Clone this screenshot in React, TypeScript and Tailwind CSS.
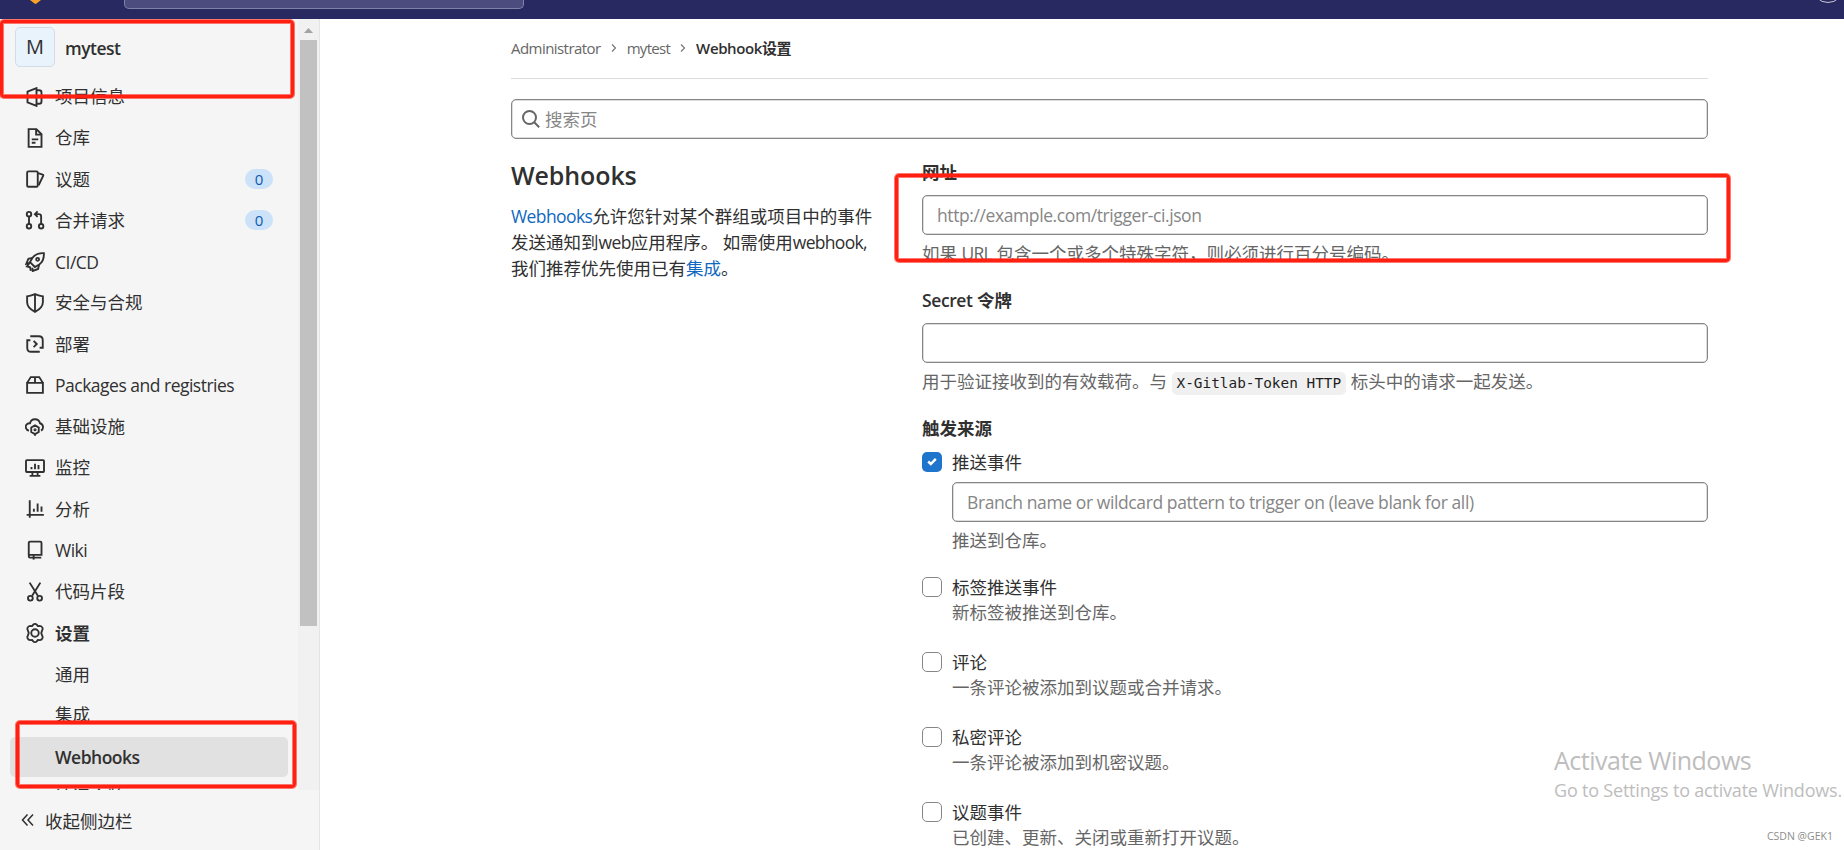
import { ReactNode } from "react";

const icons: Record<string, ReactNode> = {
  project: (
    <>
      <path d="M2 3.7 9.2.9v14.2L2 12.3z" />
      <path d="M9.2 2.6h2.1c1.1 0 1.9.8 1.9 1.9v7c0 1.1-.8 1.9-1.9 1.9H9.2" />
    </>
  ),
  doc: (
    <>
      <path d="M2.9.9h6.2l4.1 4.1v10.1H2.9z" />
      <path d="M8.9 1v4.3h4.2M5.4 9.1h5.2M5.4 11.8h3" />
    </>
  ),
  issues: (
    <>
      <rect x="1.7" y="1.9" width="8.5" height="12.3" rx="1" />
      <path d="M10.3 3.3l3.9 1.2a.6.6 0 0 1 .4.8L10.9 13" />
    </>
  ),
  merge: (
    <>
      <circle cx="3.2" cy="3.3" r="1.8" />
      <circle cx="3.2" cy="13" r="1.8" />
      <circle cx="12.9" cy="13" r="1.8" />
      <path d="M3.2 5.2v5.9M12.9 11.1V5.2c0-1.1-.8-1.9-1.9-1.9H8.4M10.1 1.1 7.9 3.3l2.2 2.2" />
    </>
  ),
  rocket: (
    <>
      <path d="M15.1.9c-4.2-.2-7 .8-9.1 3.7L4 8.100 7.900 12l3.500-2c2.900-2.100 3.900-4.900 3.700-9.100z" />
      <path d="M6 4.700 2.700 5.400 1 9.500l3.100-1M11.300 10l-.8 3.600-4.300 1.600-.3-2.600M3.900 8.400l-2.300 3.200 2.500.6.500 2.900" />
      <circle cx="10.1" cy="5.9" r="1.2" />
    </>
  ),
  shield: (
    <>
      <path d="M1.7 2.7C4 2.3 6 1.8 8 .9c2 .9 4 1.4 6.3 1.8v4.7c0 3.5-2.6 5.8-6.3 7.7-3.7-1.9-6.3-4.2-6.3-7.7z" />
      <path d="M8 1v14" />
    </>
  ),
  deploy: (
    <>
      <path d="M4.2 1.8h6.9c1.8 0 3.1 1.3 3.1 3.1V11h-2.5" />
      <path d="M4.3 5H1.8v6.1c0 1.8 1.3 3.1 3.1 3.1h6.9" />
      <path d="M6.9 5.5 9.4 8l-2.5 2.5" />
    </>
  ),
  package: (
    <>
      <path d="M1.7 6.3h12.6v8H1.7z" />
      <path d="M1.7 6.3 4.6 1.7h6.8l2.9 4.6M8 1.7v4.6" />
    </>
  ),
  cloud: (
    <>
      <path d="M3.2 10.9A3 3 0 0 1 1.4 5.9 3.2 3.2 0 0 1 4 5 4.1 4.1 0 0 1 12 5a3.2 3.2 0 0 1 .8 5.9" />
      <path d="M8 6.7l3 1.75v3.5l-3 1.75-3-1.75v-3.5z" />
      <path d="M8 13.7v1.3" />
      <circle cx="8" cy="10.2" r=".5" />
    </>
  ),
  monitor: (
    <>
      <rect x=".8" y="1.7" width="14.4" height="9.5" rx=".6" />
      <path d="M5.9 11.5v2.3M10.1 11.5v2.3M3.7 14.3h8.6M5.2 7.1v1.8M8 4.5v4.4M10.8 5.6v3.3" />
    </>
  ),
  chart: <path d="M3.8 1v14M1.3 12.7h13.8M7.1 7.8v2.4M10.1 3.6v6.6M13.2 6v4.2" />,
  book: (
    <>
      <path d="M3 12.4V2.3c0-.6.4-1 1-1h8.2c.6 0 1 .4 1 1v9.6H4c-.6 0-1 .5-1 1.1s.4 1.1 1 1.1h9" />
      <path d="M6.9 12v3.7" />
    </>
  ),
  scissors: (
    <>
      <path d="M3.7.5 10.3 11M12.3.5 5.7 11" />
      <circle cx="4.3" cy="13" r="1.9" />
      <circle cx="11.7" cy="13" r="1.9" />
    </>
  ),
  gear: (
    <>
      <path d="M6.600 1.300C7.300.6 8.700.6 9.400 1.300l.9 1.200 1.600-.2c1 0 1.700.7 2.100 1.600.3.8.2 1.400-.3 2L13 8l.7 2.100c.5.6.6 1.200.3 2-.4.9-1.100 1.600-2.100 1.600l-1.600-.2-.9 1.200c-.7.7-2.100.7-2.800 0l-.9-1.200-1.600.2c-1 0-1.700-.7-2.100-1.600-.3-.8-.2-1.400.3-2L3 8l-.7-2.100c-.5-.6-.6-1.200-.3-2 .4-.9 1.100-1.600 2.100-1.600l1.600.2z" />
      <circle cx="8" cy="8" r="3" />
    </>
  ),
};

function NavIcon({ name }: { name: string }) {
  return (
    <svg
      viewBox="0 0 16 16"
      className="w-5 h-5 shrink-0"
      fill="none"
      stroke="#303030"
      strokeWidth="1.5"
    >
      {icons[name]}
    </svg>
  );
}

const navItems = [
  { icon: "project", label: "项目信息" },
  { icon: "doc", label: "仓库" },
  { icon: "issues", label: "议题", count: 0 },
  { icon: "merge", label: "合并请求", count: 0 },
  { icon: "rocket", label: "CI/CD", latin: true },
  { icon: "shield", label: "安全与合规" },
  { icon: "deploy", label: "部署" },
  { icon: "package", label: "Packages and registries", latin: true },
  { icon: "cloud", label: "基础设施" },
  { icon: "monitor", label: "监控" },
  { icon: "chart", label: "分析" },
  { icon: "book", label: "Wiki", latin: true },
  { icon: "scissors", label: "代码片段" },
];

const triggers = [
  { label: "标签推送事件", help: "新标签被推送到仓库。" },
  { label: "评论", help: "一条评论被添加到议题或合并请求。" },
  { label: "私密评论", help: "一条评论被添加到机密议题。" },
  { label: "议题事件", help: "已创建、更新、关闭或重新打开议题。" },
];

const inputClass =
  "block h-10 w-full rounded-[5px] border border-[#868686] bg-white px-[14px] shadow-[inset_0_0_0_0.5px_#bbb] outline-none placeholder:text-[#868686]";

function Header() {
  return (
    <header className="relative h-[19px] bg-[#292961] overflow-hidden">
      <svg className="absolute left-[30px] top-0 w-3 h-1" viewBox="0 0 12 4">
        <path d="M0 0h11L6.5 3.5q-1 .8-2 0z" fill="#fca326" />
      </svg>
      <div className="ml-[124px] w-[400px] h-[9px] rounded-b-[5px] border border-t-0 border-[#8080a8] bg-[#4c4c7e]" />
      <div className="absolute left-[1812px] -top-[29px] w-8 h-8 rounded-full border border-[#c9c9da]" />
    </header>
  );
}

function Sidebar() {
  return (
    <aside className="w-80 shrink-0 flex flex-col bg-[#f5f5f5] border-r border-[#e4e4e4]">
      <div className="flex h-[772px] overflow-hidden">
        <nav className="w-[298px] shrink-0">
          <div className="flex items-center pl-[15px] pt-2 h-12">
            <div className="w-10 h-10 shrink-0 flex items-center justify-center rounded-[5px] border border-[#d0dce8] bg-[#e9f3fc] text-[20px]">
              M
            </div>
            <span className="ml-2.5 pt-0.5 font-semibold tracking-[-0.5px]">mytest</span>
          </div>
          <ul className="mt-[9px]">
            {navItems.map((item) => (
              <li key={item.icon} className="flex items-center h-[41.25px] pl-[25px] pr-[25px]">
                <NavIcon name={item.icon} />
                {item.latin ? (
                  <span className="ml-2.5 tracking-[-0.5px] whitespace-nowrap">{item.label}</span>
                ) : (
                  <span className="ml-2.5 pb-px whitespace-nowrap">{item.label}</span>
                )}
                {item.count !== undefined && (
                  <span className="ml-auto w-7 h-5 flex items-center justify-center rounded-full bg-[#cbe2f9] text-[15px] text-[#0b5cad]">
                    {item.count}
                  </span>
                )}
              </li>
            ))}
            <li className="flex items-center h-[41.25px] pl-[25px] font-bold">
              <NavIcon name="gear" />
              <span className="ml-2.5">设置</span>
            </li>
            <li className="flex items-center h-[41.25px] pl-[55px] pb-px">通用</li>
            <li className="flex items-center h-[41.25px] pl-[55px] pb-0.5">集成</li>
            <li className="flex items-center h-10 mt-[0.6px] mb-[0.6px] ml-2.5 mr-2.5 pl-[45px] rounded-[5px] bg-[#e1e1e1] font-semibold tracking-[-0.5px]">
              Webhooks
            </li>
            <li className="flex items-center h-[41.25px] pl-[55px] pb-[3px]">访问令牌</li>
          </ul>
        </nav>
        <div className="w-[21px] shrink-0 bg-[#f1f1f1] pl-0.5">
          <svg className="w-[17px] h-[21px]" viewBox="0 0 17 21">
            <path d="M4 14 8.5 9l4.5 5z" fill="#a3a3a3" />
          </svg>
          <div className="w-[17px] h-[586px] bg-[#c1c1c1]" />
        </div>
      </div>
      <div className="flex items-center h-[60px] pl-[21px]">
        <svg className="w-3.5 h-3.5" viewBox="0 0 14 14" fill="none" stroke="#303030" strokeWidth="1.5">
          <path d="M6.5 1.5 1.500 7l5 5.500M12 1.500 7 7l5 5.500" />
        </svg>
        <span className="ml-2.5 pt-px">收起侧边栏</span>
      </div>
    </aside>
  );
}

function Chevron() {
  return (
    <svg className="w-2.5 h-2.5 mx-2" viewBox="0 0 10 10" fill="none" stroke="#777" strokeWidth="1.2">
      <path d="M3 1.5 6.5 5 3 8.5" />
    </svg>
  );
}

function Checkbox({ checked }: { checked?: boolean }) {
  if (checked) {
    return (
      <span className="w-5 h-5 shrink-0 rounded-[5px] bg-[#1f75cb]">
        <svg viewBox="0 0 20 20" fill="none" stroke="#fff" strokeWidth="2.5">
          <path d="M6.200 9.500 8.800 12l5-5.200" />
        </svg>
      </span>
    );
  }
  return <span className="w-5 h-5 shrink-0 rounded-[5px] border border-[#868686] bg-white" />;
}

function Main() {
  return (
    <main className="ml-[191px] w-[1197px] shrink-0">
      <div className="flex items-center h-[60px] pb-0.5 border-b border-[#dbdbdb] text-[15px] leading-5 text-[#666]">
        <span className="tracking-[-0.55px]">Administrator</span>
        <Chevron />
        <span className="tracking-[-0.7px]">mytest</span>
        <Chevron />
        <span className="font-semibold text-[#303030] tracking-[-0.4px]">Webhook设置</span>
      </div>
      <div className="relative mt-5">
        <svg
          className="absolute left-[11px] top-[11px] w-[18px] h-[18px]"
          viewBox="0 0 18 18"
          fill="none"
          stroke="#666"
          strokeWidth="2"
        >
          <circle cx="7.5" cy="7.5" r="6.5" />
          <path d="m12.2 12.2 5 5" />
        </svg>
        <input className={`${inputClass} !pl-[33px]`} placeholder="搜索页" />
      </div>
      <div className="flex">
        <section className="w-[411px] shrink-0 pt-[19px]">
          <h4 className="text-[25px] leading-[34px] font-semibold tracking-[-0.1px]">Webhooks</h4>
          <p className="mt-[10.5px] w-[370px] leading-[26.25px] whitespace-nowrap">
            <span className="text-[#1068bf] tracking-[-0.6px]">Webhooks</span>允许您针对某个群组或项目中的事件
            <br />
            发送通知到<span className="tracking-[-0.6px]">web</span>应用程序。 如需使用
            <span className="tracking-[-0.7px]">webhook,</span>
            <br />
            我们推荐优先使用已有<span className="text-[#1068bf]">集成</span>。
          </p>
        </section>
        <form className="flex-1 pt-5">
          <label className="block h-9 leading-[26px] font-bold">网址</label>
          <input className={`${inputClass} tracking-[-0.4px]`} placeholder="http://example.com/trigger-ci.json" />
          <p className="h-[53px] pt-[5px] leading-[26px] text-[#666]">
            如果 <span className="tracking-[-0.8px]">URL</span> 包含一个或多个特殊字符，则必须进行百分号编码。
          </p>
          <label className="block h-[35px] leading-[25px] font-bold">
            <span className="font-semibold tracking-[-0.4px]">Secret</span> 令牌
          </label>
          <input className={inputClass} />
          <p className="h-[53px] pt-[5px] leading-[26px] text-[#666] whitespace-nowrap">
            用于验证接收到的有效载荷。与{" "}
            <code className="inline-block h-[23px] leading-[23px] px-[5px] rounded-[5px] bg-[#f0f0f0] text-[14.4px] text-[#1f1f1f] font-['DejaVu_Sans_Mono',monospace]">
              X-Gitlab-Token HTTP
            </code>{" "}
            标头中的请求一起发送。
          </p>
          <label className="block h-9 leading-[25px] font-bold">触发来源</label>
          <div className="flex">
            <Checkbox checked />
            <div className="ml-2.5 flex-1">
              <div className="h-[30px] leading-5">推送事件</div>
              <input
                className={`${inputClass} tracking-[-0.4px]`}
                placeholder="Branch name or wildcard pattern to trigger on (leave blank for all)"
              />
              <p className="h-[55px] pt-[5px] leading-[26px] text-[#666]">推送到仓库。</p>
            </div>
          </div>
          {triggers.map((trigger) => (
            <div key={trigger.label} className="flex h-[75px]">
              <Checkbox />
              <div className="ml-2.5">
                <div className="leading-5">{trigger.label}</div>
                <p className="mt-[3px] leading-[25px] text-[#666]">{trigger.help}</p>
              </div>
            </div>
          ))}
        </form>
      </div>
    </main>
  );
}

const markClass =
  "absolute rounded-[4px] border-[3px] border-[#ff2011] shadow-[0_0_0_1px_#ff201199,inset_0_0_0_1px_#ff201199]";

export default function App() {
  return (
    <div className="relative h-[850px] w-[1844px] overflow-hidden bg-white text-[17.5px] leading-[26px] text-[#303030] font-['Open_Sans','Noto_Sans_CJK_SC',sans-serif]">
      <Header />
      <div className="flex h-[831px] overflow-hidden">
        <Sidebar />
        <Main />
      </div>

      <div className={`${markClass} left-0 top-5 w-[294px] h-[78px]`} />
      <div className={`${markClass} left-4 top-[721px] w-[280px] h-[67px]`} />
      <div className={`${markClass} left-[895px] top-[174px] w-[835px] h-[88px]`} />

      <div className="absolute left-[1554px] top-[743px] whitespace-nowrap text-[#bdbdbd]">
        <div className="text-[25px] leading-[34px] tracking-[-0.5px]">Activate Windows</div>
        <div className="text-[18px] leading-[26px] tracking-[-0.2px]">Go to Settings to activate Windows.</div>
      </div>
      <div className="absolute left-[1767px] top-[828px] text-[10.5px] leading-4 text-[#8c8c8c] whitespace-nowrap">
        CSDN @GEK1
      </div>
    </div>
  );
}
